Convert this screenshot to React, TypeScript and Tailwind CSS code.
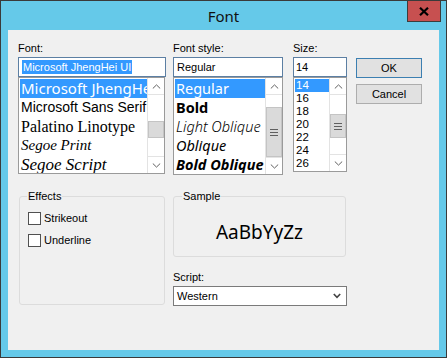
import React from "react";

function Chev({ up }: { up?: boolean }) {
  return (
    <svg width="9" height="5" viewBox="0 0 9 5">
      <path
        d={up ? "M0.8 4.5 L4.5 0.9 L8.2 4.5" : "M0.8 0.5 L4.5 4.1 L8.2 0.5"}
        fill="none"
        stroke="#606060"
        strokeWidth="1"
      />
    </svg>
  );
}

function Grip() {
  return (
    <svg width="8" height="7" viewBox="0 0 8 7">
      <rect x="0" y="0" width="8" height="1" fill="#606060" />
      <rect x="0" y="3" width="8" height="1" fill="#606060" />
      <rect x="0" y="6" width="8" height="1" fill="#606060" />
    </svg>
  );
}

function Scrollbar({ spacer, thumb, grip }: { spacer: string; thumb: string; grip?: boolean }) {
  return (
    <div className="w-[17px] shrink-0 flex flex-col bg-white border-l border-[#e3e3e3]">
      <div className="h-[17px] shrink-0 flex items-center justify-center border-b border-[#e3e3e3]">
        <Chev up />
      </div>
      <div className="flex-1 flex flex-col">
        <div className={spacer} />
        <div className={thumb + " bg-[#dadada] border border-[#c4c4c4] flex items-center justify-center"}>
          {grip ? <Grip /> : null}
        </div>
      </div>
      <div className="h-[17px] shrink-0 flex items-center justify-center border-t border-[#e3e3e3]">
        <Chev />
      </div>
    </div>
  );
}

function Label({ children }: { children: React.ReactNode }) {
  return <div className="h-[13px] leading-[13px] mb-[2px] whitespace-nowrap">{children}</div>;
}

export default function App() {
  return (
    <div className="w-[447px] h-[358px] bg-[#65c9e9] border border-[#3a3a3a] flex flex-col font-['Liberation_Sans',Arial,sans-serif] text-[11px] text-black overflow-hidden">
      {/* title bar */}
      <div className="h-[29px] shrink-0 grid grid-cols-[1fr_auto_1fr]">
        <div />
        <div className="self-center font-['Noto_Sans',sans-serif] text-[15px] leading-[20px] text-[#111]">Font</div>
        <div className="justify-self-end self-start -mt-px mr-[5px] w-[34px] h-[22px] bg-[#c75050] border border-[#3c3c3c] flex items-center justify-center">
          <svg width="10" height="9" viewBox="0 0 10 9">
            <path d="M1 0.8 L9 8.2 M9 0.8 L1 8.2" stroke="#000" strokeWidth="2.2" />
          </svg>
        </div>
      </div>

      {/* client */}
      <div className="mx-[7px] h-[320px] shrink-0 bg-[#f0f0f0] flex flex-col pt-[12px]">
        <div className="flex">
          {/* Font column */}
          <div className="ml-[10px] w-[148px] flex flex-col">
            <Label>Font:</Label>
            <div className="h-[20px] bg-white border border-[#5c7fa3] flex items-center pl-[3px]">
              <span className="bg-[#3399ff] text-white leading-[14px] px-[1px]">Microsoft JhengHei UI</span>
            </div>
            <div className="w-[147px] h-[97px] bg-white border border-[#9a9a9a] flex">
              <div className="flex-1 overflow-hidden pt-px pl-px">
                <div className="h-[19px] leading-[19px] whitespace-nowrap bg-[#3399ff] text-white font-['Noto_Sans',sans-serif] text-[15px] pl-px">
                  Microsoft JhengHei
                </div>
                <div className="h-[19px] leading-[19px] whitespace-nowrap font-['Liberation_Sans',sans-serif] text-[14px] pl-px">
                  Microsoft Sans Serif
                </div>
                <div className="h-[19px] leading-[19px] whitespace-nowrap font-['Liberation_Serif',serif] text-[16px] pl-px">
                  Palatino Linotype
                </div>
                <div className="h-[19px] leading-[19px] whitespace-nowrap font-['Liberation_Serif',serif] italic text-[15px] pl-px">
                  Segoe Print
                </div>
                <div className="h-[19px] leading-[19px] whitespace-nowrap font-['Liberation_Serif',serif] italic text-[17px] pl-px">
                  Segoe Script
                </div>
              </div>
              <Scrollbar spacer="h-[26px]" thumb="h-[17px]" />
            </div>
          </div>

          {/* Font style column */}
          <div className="ml-[7px] w-[110px] flex flex-col">
            <Label>Font style:</Label>
            <div className="h-[20px] bg-white border border-[#5c7fa3] flex items-center pl-[3px]">Regular</div>
            <div className="h-[98px] bg-white border border-[#9a9a9a] flex">
              <div className="flex-1 overflow-hidden pt-px pl-px font-['Noto_Sans',sans-serif] text-[14.5px]">
                <div className="h-[19px] leading-[19px] whitespace-nowrap bg-[#3399ff] text-white pl-px">Regular</div>
                <div className="h-[19px] leading-[19px] whitespace-nowrap font-bold pl-px">Bold</div>
                <div className="h-[19px] leading-[19px] whitespace-nowrap font-light italic pl-px">Light Oblique</div>
                <div className="h-[19px] leading-[19px] whitespace-nowrap italic pl-px">Oblique</div>
                <div className="h-[19px] leading-[19px] whitespace-nowrap font-bold italic pl-px">Bold Oblique</div>
              </div>
              <Scrollbar spacer="h-[12px]" thumb="h-[50px]" grip />
            </div>
          </div>

          {/* Size column */}
          <div className="ml-[10px] w-[54px] flex flex-col">
            <Label>Size:</Label>
            <div className="h-[20px] bg-white border border-[#5c7fa3] flex items-center pl-[2px]">14</div>
            <div className="h-[95px] bg-white border border-[#9a9a9a] flex">
              <div className="flex-1 overflow-hidden pt-px pl-px font-['Liberation_Sans',sans-serif] text-[11.5px]">
                <div className="h-[13px] leading-[13px] bg-[#3399ff] text-white pl-px">14</div>
                <div className="h-[13px] leading-[13px] pl-px">16</div>
                <div className="h-[13px] leading-[13px] pl-px">18</div>
                <div className="h-[13px] leading-[13px] pl-px">20</div>
                <div className="h-[13px] leading-[13px] pl-px">22</div>
                <div className="h-[13px] leading-[13px] pl-px">24</div>
                <div className="h-[13px] leading-[13px] pl-px">26</div>
              </div>
              <Scrollbar spacer="h-[19px]" thumb="h-[24px]" grip />
            </div>
          </div>

          {/* Buttons */}
          <div className="ml-[9px] w-[66px] flex flex-col gap-[6px] pt-[16px]">
            <div className="h-[20px] bg-[#e1e1e1] border border-[#3c7fb1] flex items-center justify-center">OK</div>
            <div className="h-[20px] bg-[#e1e1e1] border border-[#adadad] flex items-center justify-center">Cancel</div>
          </div>
        </div>

        {/* bottom */}
        <div className="flex mt-[21px] pl-[11px]">
          <div className="relative w-[146px] h-[109px] border border-[#dcdcdc] rounded-[3px] pt-[15px] pl-[8px] flex flex-col gap-[9px]">
            <div className="absolute -top-[7px] left-[7px] px-px bg-[#f0f0f0] leading-[13px]">Effects</div>
            <div className="flex items-center gap-[3px] h-[13px]">
              <div className="w-[13px] h-[13px] bg-white border border-[#505050]" />
              <span className="leading-[13px]">Strikeout</span>
            </div>
            <div className="flex items-center gap-[3px] h-[13px]">
              <div className="w-[13px] h-[13px] bg-white border border-[#505050]" />
              <span className="leading-[13px]">Underline</span>
            </div>
          </div>

          <div className="ml-[8px] w-[174px] flex flex-col">
            <div className="relative w-[173px] h-[61px] border border-[#dcdcdc] rounded-[3px] pt-[10px] flex items-center justify-center">
              <div className="absolute -top-[7px] left-[8px] px-px bg-[#f0f0f0] leading-[13px]">Sample</div>
              <span className="font-['Noto_Sans',sans-serif] text-[19px] leading-[24px]">AaBbYyZz</span>
            </div>
            <div className="mt-[14px]">
              <Label>Script:</Label>
            </div>
            <div className="h-[20px] bg-white border border-[#7a7a7a] flex items-center justify-between pl-[3px] pr-[5px]">
              <span>Western</span>
              <svg width="8" height="6" viewBox="0 0 8 6">
                <path d="M0.8 1 L4 4.4 L7.2 1" fill="none" stroke="#444" strokeWidth="1.6" />
              </svg>
            </div>
          </div>
        </div>
      </div>
    </div>
  );
}
